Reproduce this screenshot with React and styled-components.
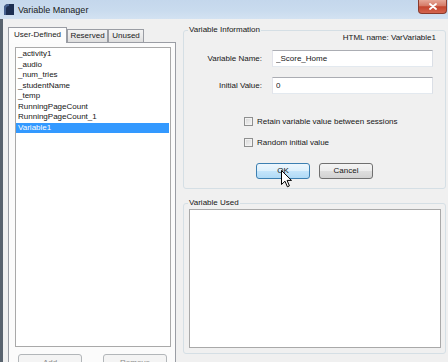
import React from 'react'
import styled, { createGlobalStyle } from 'styled-components'

const GlobalStyle = createGlobalStyle`
  html, body {
    margin: 0;
    padding: 0;
    overflow: hidden;
  }
  body {
    font-family: "Liberation Sans", Arial, sans-serif;
    font-size: 8px;
    color: #161616;
  }
`

const Window = styled.div`
  width: 448px;
  height: 362px;
  display: flex;
  flex-direction: column;
  overflow: hidden;
  background: #f0f0f0;
`

const TitleBar = styled.div`
  height: 19px;
  flex: none;
  display: flex;
  align-items: flex-start;
  padding-left: 3px;
  background: linear-gradient(180deg, #c4d7ec 0%, #c9dbee 55%, #d3e2f2 100%);
`

const TitleIcon = styled.svg`
  margin-top: 3px;
  flex: none;
`

const Title = styled.div`
  margin: 5px 0 0 3px;
  font-size: 9px;
  line-height: 10px;
  color: #1a1a1a;
`

const CloseButton = styled.div`
  margin-left: auto;
  margin-right: 1px;
  width: 29px;
  height: 14px;
  box-sizing: border-box;
  border: 1px solid #8a3a2c;
  border-top: none;
  border-radius: 0 0 4px 4px;
  background: linear-gradient(180deg, #e6a797 0%, #d57a66 45%, #c4452e 52%, #d4654f 100%);
  display: flex;
  align-items: center;
  justify-content: center;
`

const Body = styled.div`
  flex: 1;
  min-height: 0;
  display: flex;
  border-left: 3px solid #59636e;
`

const LeftPane = styled.div`
  width: 173px;
  flex: none;
  box-sizing: border-box;
  padding: 8px 0 0 5px;
  display: flex;
  flex-direction: column;
`

const TabRow = styled.div`
  display: flex;
  align-items: flex-end;
  height: 16px;
  position: relative;
  z-index: 1;
`

const Tab = styled.div`
  box-sizing: border-box;
  width: ${({ $w }) => $w}px;
  height: ${({ $active }) => ($active ? 16 : 14)}px;
  border: 1px solid #9a9da4;
  border-bottom: ${({ $active }) => ($active ? 'none' : '1px solid #9a9da4')};
  background: ${({ $active }) =>
    $active ? '#fcfcfc' : 'linear-gradient(180deg, #f3f3f3 0%, #ebebeb 50%, #dedede 100%)'};
  display: flex;
  align-items: center;
  justify-content: center;
  padding-bottom: ${({ $active }) => ($active ? 1 : 0)}px;
  line-height: 10px;
  color: #1a1a1a;
`

const TabPanel = styled.div`
  margin-top: -1px;
  width: 168px;
  flex: 1;
  box-sizing: border-box;
  border: 1px solid #9a9da4;
  border-bottom: none;
  background: #fbfbfb;
  padding: 4px 4px 0 6px;
  display: flex;
  flex-direction: column;
`

const ListBox = styled.div`
  height: 300px;
  flex: none;
  box-sizing: border-box;
  border: 1px solid #a9a9a9;
  background: #fff;
  padding-top: 1px;
`

const ListItem = styled.div`
  height: 10.5px;
  line-height: 10.5px;
  padding-left: 2px;
  margin-right: 1px;
  white-space: nowrap;
  background: ${({ $selected }) => ($selected ? '#3399ff' : 'transparent')};
  color: ${({ $selected }) => ($selected ? '#fff' : '#161616')};
`

const ListButtons = styled.div`
  margin-top: 7px;
  display: flex;
  justify-content: space-between;
  padding: 0 4px 0 3px;
`

const Button = styled.div`
  position: relative;
  box-sizing: border-box;
  width: ${({ $w }) => $w}px;
  height: ${({ $h }) => $h}px;
  border: 1px solid #707070;
  border-radius: 3px;
  display: flex;
  align-items: center;
  justify-content: center;
  line-height: 10px;
  color: #161616;
  background: linear-gradient(180deg, #f4f4f4 0%, #ececec 50%, #dedede 51%, #d2d2d2 100%);

  ${({ $variant }) =>
    $variant === 'hover' &&
    `
    border-color: #3c7fb1;
    background: linear-gradient(180deg, #edf6fd 0%, #dcf0fc 50%, #c4e5fb 51%, #b0daf6 100%);
  `}

  ${({ $variant }) =>
    $variant === 'disabled' &&
    `
    border-color: #b2b6b9;
    color: #8a8a8a;
    background: #f4f4f4;
    align-items: flex-start;
    padding-top: 3px;
  `}
`

const Cursor = styled.svg`
  position: absolute;
  left: 24px;
  top: 6px;
`

const RightPane = styled.div`
  flex: 1;
  min-width: 0;
  padding: 7px 2px 0 7px;
  display: flex;
  flex-direction: column;
`

const Group = styled.fieldset`
  margin: ${({ $top }) => $top || 0}px 0 0 0;
  width: 263px;
  box-sizing: border-box;
  min-width: 0;
  border: 1px solid #d5dfe5;
  border-radius: 3px;
  padding: ${({ $pad }) => $pad};
`

const Legend = styled.legend`
  padding: 0 1px;
  margin-left: ${({ $shift }) => $shift || 0}px;
  font-size: 8px;
  line-height: 8px;
  color: #161616;
`

const HtmlName = styled.div`
  margin-top: -1px;
  text-align: right;
  line-height: 10px;
`

const FieldRow = styled.div`
  display: flex;
  align-items: center;
  margin-top: ${({ $top }) => $top}px;
`

const FieldLabel = styled.label`
  width: 74px;
  margin-right: 10px;
  text-align: right;
  white-space: nowrap;
`

const TextBox = styled.input`
  width: 161px;
  height: 17px;
  box-sizing: border-box;
  margin: 0;
  padding: 0 3px;
  border: 1px solid;
  border-color: #abadb3 #dbdfe6 #e3e9ef #e2e3ea;
  background: #fff;
  font: inherit;
  color: #161616;
  outline: none;
`

const CheckRow = styled.label`
  display: flex;
  align-items: center;
  height: 10px;
  margin-top: ${({ $top }) => $top}px;
  padding-left: 56px;
  white-space: nowrap;
`

const CheckBox = styled.span`
  width: 9px;
  height: 9px;
  flex: none;
  box-sizing: border-box;
  margin-right: 4px;
  border: 1px solid #8e8f8f;
  box-shadow: inset 0 0 0 1px #f2f2f2;
  background: linear-gradient(135deg, #d6d6d6 0%, #f6f6f6 100%);
`

const DialogButtons = styled.div`
  display: flex;
  gap: 9px;
  margin-top: 16px;
  padding-left: 68px;
`

const UsedBox = styled.div`
  margin-top: 2px;
  width: 252px;
  height: 139px;
  box-sizing: border-box;
  border: 1px solid #a9a9a9;
  background: #fff;
`

const variables = [
  '_activity1',
  '_audio',
  '_num_tries',
  '_studentName',
  '_temp',
  'RunningPageCount',
  'RunningPageCount_1',
  'Variable1',
]

export default function App() {
  return (
    <>
      <GlobalStyle />
      <Window>
        <TitleBar>
          <TitleIcon width="12" height="13" viewBox="0 0 12 13">
            <path d="M1 12 L1 5 Q1 1 6 1 L11 1 L11 12 Z" fill="#1d2f52" />
            <path d="M1 5 Q1 1 6 1 L6 3 Q3 3 3 6 L3 12 L1 12 Z" fill="#46618f" />
          </TitleIcon>
          <Title>Variable Manager</Title>
          <CloseButton>
            <svg width="8" height="7" viewBox="0 0 8 7">
              <path d="M1 1 L7 6 M7 1 L1 6" stroke="#fff" strokeWidth="1.8" strokeLinecap="round" />
            </svg>
          </CloseButton>
        </TitleBar>

        <Body>
          <LeftPane>
            <TabRow>
              <Tab $active $w={59}>User-Defined</Tab>
              <Tab $w={41}>Reserved</Tab>
              <Tab $w={36}>Unused</Tab>
            </TabRow>
            <TabPanel>
              <ListBox>
                {variables.map((name) => (
                  <ListItem key={name} $selected={name === 'Variable1'}>
                    {name}
                  </ListItem>
                ))}
              </ListBox>
              <ListButtons>
                <Button $variant="disabled" $w={64} $h={21}>Add</Button>
                <Button $variant="disabled" $w={64} $h={21}>Remove</Button>
              </ListButtons>
            </TabPanel>
          </LeftPane>

          <RightPane>
            <Group $pad="0 9px 9px 4px">
              <Legend>Variable Information</Legend>
              <HtmlName>HTML name: VarVariable1</HtmlName>
              <FieldRow $top={7}>
                <FieldLabel>Variable Name:</FieldLabel>
                <TextBox readOnly value="_Score_Home" />
              </FieldRow>
              <FieldRow $top={10}>
                <FieldLabel>Initial Value:</FieldLabel>
                <TextBox readOnly value="0" />
              </FieldRow>
              <CheckRow $top={22}>
                <CheckBox />
                Retain variable value between sessions
              </CheckRow>
              <CheckRow $top={11}>
                <CheckBox />
                Random initial value
              </CheckRow>
              <DialogButtons>
                <Button $variant="hover" $w={54} $h={16}>
                  OK
                  <Cursor width="11" height="18" viewBox="0 0 11 18">
                    <path
                      d="M0.5 0.5 L0.5 14.5 L4 11.2 L6.4 16.8 L8.4 15.9 L6.1 10.4 L10.5 10.4 Z"
                      fill="#fff"
                      stroke="#000"
                      strokeWidth="1"
                      strokeLinejoin="round"
                    />
                  </Cursor>
                </Button>
                <Button $w={54} $h={16}>Cancel</Button>
              </DialogButtons>
            </Group>

            <Group $top={10} $pad="0 4px 5px 5px">
              <Legend $shift={-1}>Variable Used</Legend>
              <UsedBox />
            </Group>
          </RightPane>
        </Body>
      </Window>
    </>
  )
}
